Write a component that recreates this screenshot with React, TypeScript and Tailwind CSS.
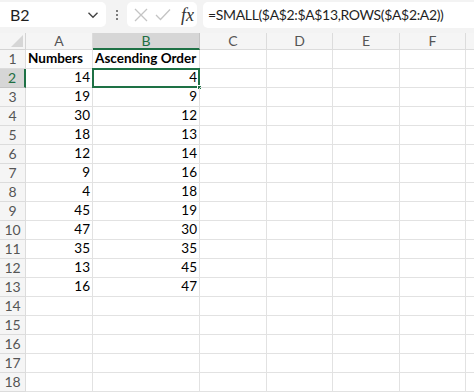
import React from 'react'

const COLS = [
  { key: 'A', w: 'w-[67px]' },
  { key: 'B', w: 'w-[107px]' },
  { key: 'C', w: 'w-[67px]' },
  { key: 'D', w: 'w-[66px]' },
  { key: 'E', w: 'w-[67px]' },
  { key: 'F', w: 'w-[66px]' },
  { key: 'G', w: 'w-[40px]' },
]

const numbers = [14, 19, 30, 18, 12, 9, 4, 45, 47, 35, 13, 16]
const sorted = [...numbers].sort((a, b) => a - b)

function cellValue(row: number, col: string): { text: string; bold?: boolean; right?: boolean } | null {
  if (row === 1 && col === 'A') return { text: 'Numbers', bold: true }
  if (row === 1 && col === 'B') return { text: 'Ascending Order', bold: true }
  if (row >= 2 && row <= 13 && col === 'A') return { text: String(numbers[row - 2]), right: true }
  if (row >= 2 && row <= 13 && col === 'B') return { text: String(sorted[row - 2]), right: true }
  return null
}

export default function App() {
  const rows = Array.from({ length: 18 }, (_, i) => i + 1)

  return (
    <div
      className="w-[474px] h-[392px] overflow-hidden bg-[#f3f3f3] text-[#1f1f1f]"
      style={{ fontFamily: 'Lato, "Noto Sans", sans-serif' }}
    >
      {/* Formula bar */}
      <div className="h-[33px] flex items-start pt-[2px]">
        <div className="w-[106px] h-[25px] shrink-0 bg-white rounded-r-[5px] flex items-center justify-between pl-[10px] pr-[7px]">
          <span className="text-[16px] leading-none">B2</span>
          <svg width="12" height="8" viewBox="0 0 12 8" fill="none" stroke="#444" strokeWidth="1.4">
            <path d="M1.5 1.8 L6 6.2 L10.5 1.8" />
          </svg>
        </div>
        <div className="w-[21px] h-[25px] shrink-0 flex flex-col items-center justify-center gap-[2px]">
          <span className="w-[2px] h-[2px] bg-[#555] rounded-full" />
          <span className="w-[2px] h-[2px] bg-[#555] rounded-full" />
          <span className="w-[2px] h-[2px] bg-[#555] rounded-full" />
        </div>
        <div className="w-[70px] h-[25px] shrink-0 bg-white rounded-[5px] flex items-center pl-[7px] gap-[7px]">
          <svg width="14" height="14" viewBox="0 0 14 14" fill="none" stroke="#c4c4c4" strokeWidth="1.3">
            <path d="M1 1 L13 13 M13 1 L1 13" />
          </svg>
          <svg width="16" height="13" viewBox="0 0 16 13" fill="none" stroke="#c4c4c4" strokeWidth="1.3">
            <path d="M1 7 L5.5 11.5 L15 1.5" />
          </svg>
          <span
            className="text-[18px] italic leading-none text-[#333] ml-[3px]"
            style={{ fontFamily: '"Liberation Serif", serif' }}
          >
            fx
          </span>
        </div>
        <div className="ml-[6px] flex-1 min-w-0 h-[26px] bg-white rounded-l-[5px] flex items-center pl-[5px]">
          <span className="text-[14px] leading-none whitespace-nowrap tracking-[-0.35px]">
            =SMALL($A$2:$A$13,ROWS($A$2:A2))
          </span>
        </div>
      </div>

      {/* Sheet */}
      <div className="bg-white">
        {/* column headers */}
        <div className="flex h-[17px] bg-[#f5f5f5]">
          <div className="w-[26px] shrink-0 border-r border-b border-[#d4d4d4] relative">
            <svg className="absolute right-[2px] bottom-[2px]" width="12" height="12" viewBox="0 0 12 12">
              <path d="M12 0 L12 12 L0 12 Z" fill="#d6d6d6" />
            </svg>
          </div>
          {COLS.map(c => (
            <div
              key={c.key}
              className={`${c.w} shrink-0 flex items-center justify-center text-[14px] leading-none ${
                c.key === 'B'
                  ? 'bg-[#d6d6d6] text-[#1e6e42] border-b-2 border-b-[#1e7145] border-r border-r-[#c4c4c4]'
                  : 'text-[#555] border-r border-b border-[#dcdcdc]'
              }`}
            >
              {c.key === 'G' ? '' : c.key}
            </div>
          ))}
        </div>

        {rows.map(r => (
          <div key={r} className="flex h-[19px]">
            <div
              className={`w-[26px] shrink-0 flex items-center justify-center text-[14px] leading-none ${
                r === 2
                  ? 'bg-[#d6d6d6] text-[#1e6e42] border-r-2 border-r-[#1e7145] border-b border-b-[#c4c4c4]'
                  : 'bg-[#f5f5f5] text-[#555] border-r border-b border-[#dcdcdc]'
              }`}
            >
              {r}
            </div>
            {COLS.map(c => {
              const v = cellValue(r, c.key)
              const selected = r === 2 && c.key === 'B'
              return (
                <div
                  key={c.key}
                  className={`${c.w} shrink-0 relative border-r border-b border-[#e2e2e2] flex items-center px-[2px] text-[13.5px] leading-none text-black whitespace-nowrap ${
                    v?.right ? 'justify-end' : 'justify-start'
                  } ${v?.bold ? 'font-bold' : ''}`}
                >
                  {v?.text}
                  {selected && (
                    <>
                      <div className="absolute -left-[1px] -top-[1px] -right-[1px] -bottom-[1px] border-2 border-[#1e7145]" />
                      <div className="absolute -right-[3px] -bottom-[3px] w-[5px] h-[5px] bg-[#1e7145] border border-white" />
                    </>
                  )}
                </div>
              )
            })}
          </div>
        ))}
      </div>
    </div>
  )
}
